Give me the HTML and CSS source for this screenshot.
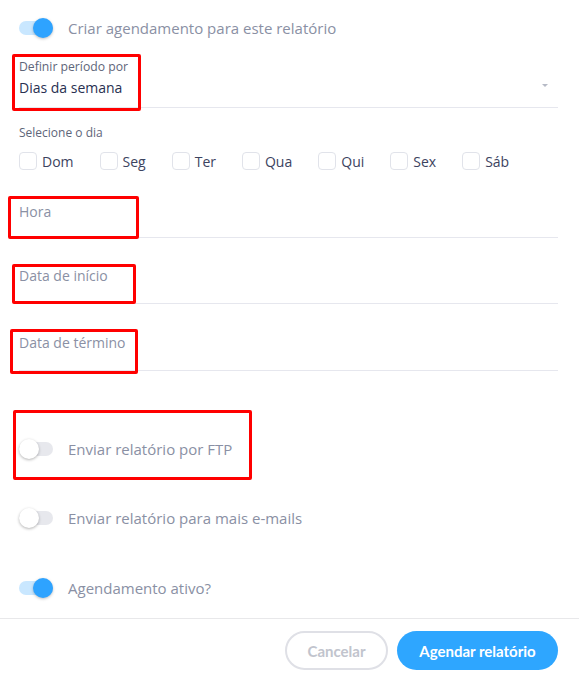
FILE: index.html
```html
<!DOCTYPE html>
<html lang="pt">
<head>
    <meta charset="UTF-8">
    <meta name="viewport" content="width=device-width, initial-scale=1.0">
    <title>Agendar relatório</title>
    <link rel="stylesheet" href="styles.css">
</head>
<body>
    <div class="form">
        <div class="switch_row">
            <span class="switch on"><span class="knob"></span></span>
            <span class="switch_text">Criar agendamento para este relatório</span>
        </div>

        <div class="select_field">
            <div class="small_label">Definir período por</div>
            <div class="select_value">Dias da semana</div>
            <span class="caret"></span>
        </div>

        <div class="days_label">Selecione o dia</div>
        <div class="days">
            <label class="day"><span class="box"></span>Dom</label>
            <label class="day"><span class="box"></span>Seg</label>
            <label class="day"><span class="box"></span>Ter</label>
            <label class="day"><span class="box"></span>Qua</label>
            <label class="day"><span class="box"></span>Qui</label>
            <label class="day"><span class="box"></span>Sex</label>
            <label class="day"><span class="box"></span>Sáb</label>
        </div>

        <div class="text_field hora">Hora</div>
        <div class="text_field inicio">Data de início</div>
        <div class="text_field termino">Data de término</div>

        <div class="switch_row ftp">
            <span class="switch"><span class="knob"></span></span>
            <span class="switch_text">Enviar relatório por FTP</span>
        </div>
        <div class="switch_row emails">
            <span class="switch"><span class="knob"></span></span>
            <span class="switch_text">Enviar relatório para mais e-mails</span>
        </div>
        <div class="switch_row ativo">
            <span class="switch on"><span class="knob"></span></span>
            <span class="switch_text">Agendamento ativo?</span>
        </div>
    </div>

    <div class="footer">
        <button class="btn cancel">Cancelar</button>
        <button class="btn submit">Agendar relatório</button>
    </div>

    <!-- marcações vermelhas -->
    <div class="mark mark_periodo"></div>
    <div class="mark mark_hora"></div>
    <div class="mark mark_inicio"></div>
    <div class="mark mark_termino"></div>
    <div class="mark mark_ftp"></div>
</body>
</html>
```

FILE: styles.css
```css
body{
    margin: 0;
    background: #fff;
    font-family: "Open Sans", "Liberation Sans", sans-serif;
    color: #8a90a4;
    position: relative;
}
.form{
    padding: 18px 21px 0 19px;
}
.switch_row{
    display: flex;
    align-items: center;
    gap: 15px;
    height: 20px;
}
.switch{
    position: relative;
    width: 34px;
    height: 14px;
    border-radius: 7px;
    background: #e7e8ed;
    flex: none;
}
.switch .knob{
    position: absolute;
    left: 0;
    top: -3px;
    width: 20px;
    height: 20px;
    border-radius: 50%;
    background: #fff;
    box-shadow: 0 1px 3px rgba(0, 0, 0, 0.3);
}
.switch.on{
    background: #c9e7ff;
}
.switch.on .knob{
    left: 14px;
    background: #2ea3ff;
    box-shadow: 0 1px 3px rgba(0, 0, 0, 0.25);
}
.switch_text{
    font-size: 15px;
    color: #8a90a4;
}
.select_field{
    position: relative;
    margin-top: 21px;
    padding-bottom: 9px;
    border-bottom: 1px solid #e6e7ee;
}
.small_label{
    font-size: 12.2px;
    line-height: 15px;
    color: #5e6579;
}
.select_value{
    margin-top: 4px;
    font-size: 14px;
    line-height: 20px;
    color: #283051;
}
.caret{
    position: absolute;
    right: 10px;
    top: 25px;
    border-left: 3px solid transparent;
    border-right: 3px solid transparent;
    border-top: 3px solid #b6bac6;
}
.days_label{
    margin-top: 18px;
    font-size: 12px;
    line-height: 14px;
    color: #5e6579;
}
.days{
    display: flex;
    margin-top: 12px;
    height: 18px;
}
.day{
    display: flex;
    align-items: center;
    gap: 5px;
    margin-right: 26px;
    font-size: 14px;
    color: #3c4360;
}
.box{
    width: 16px;
    height: 16px;
    border: 1px solid #e1e3ea;
    border-radius: 4px;
}
.text_field{
    font-size: 14px;
    line-height: 18px;
    color: #8a90a4;
    border-bottom: 1px solid #e6e7ee;
}
.hora{
    margin-top: 33px;
    padding-bottom: 16px;
}
.inicio{
    margin-top: 29px;
    padding-bottom: 18px;
}
.termino{
    margin-top: 30px;
    padding-bottom: 18px;
}
.ftp{
    margin-top: 68px;
}
.emails{
    margin-top: 49px;
}
.ativo{
    margin-top: 50px;
}
.footer{
    margin-top: 20px;
    border-top: 1px solid #e8e8ea;
    padding: 12px 21px 0 0;
    display: flex;
    justify-content: flex-end;
    gap: 9px;
}
.btn{
    height: 39px;
    border-radius: 20px;
    font-family: "Lato", "Open Sans", sans-serif;
    font-weight: 700;
    font-size: 15px;
    cursor: pointer;
}
.cancel{
    width: 103px;
    background: #fff;
    border: 2px solid #dfe0e6;
    color: #c1c4cd;
}
.submit{
    width: 161px;
    background: #2ea6ff;
    border: none;
    color: #fff;
}
.mark{
    position: absolute;
    box-sizing: border-box;
    border: 3px solid #ff0000;
    border-radius: 2px;
}
.mark_periodo{
    left: 12px;
    top: 54px;
    width: 129px;
    height: 57px;
}
.mark_hora{
    left: 8px;
    top: 196px;
    width: 131px;
    height: 43px;
}
.mark_inicio{
    left: 12px;
    top: 264px;
    width: 124px;
    height: 40px;
}
.mark_termino{
    left: 10px;
    top: 329px;
    width: 128px;
    height: 45px;
}
.mark_ftp{
    left: 13px;
    top: 410px;
    width: 239px;
    height: 70px;
}
```
